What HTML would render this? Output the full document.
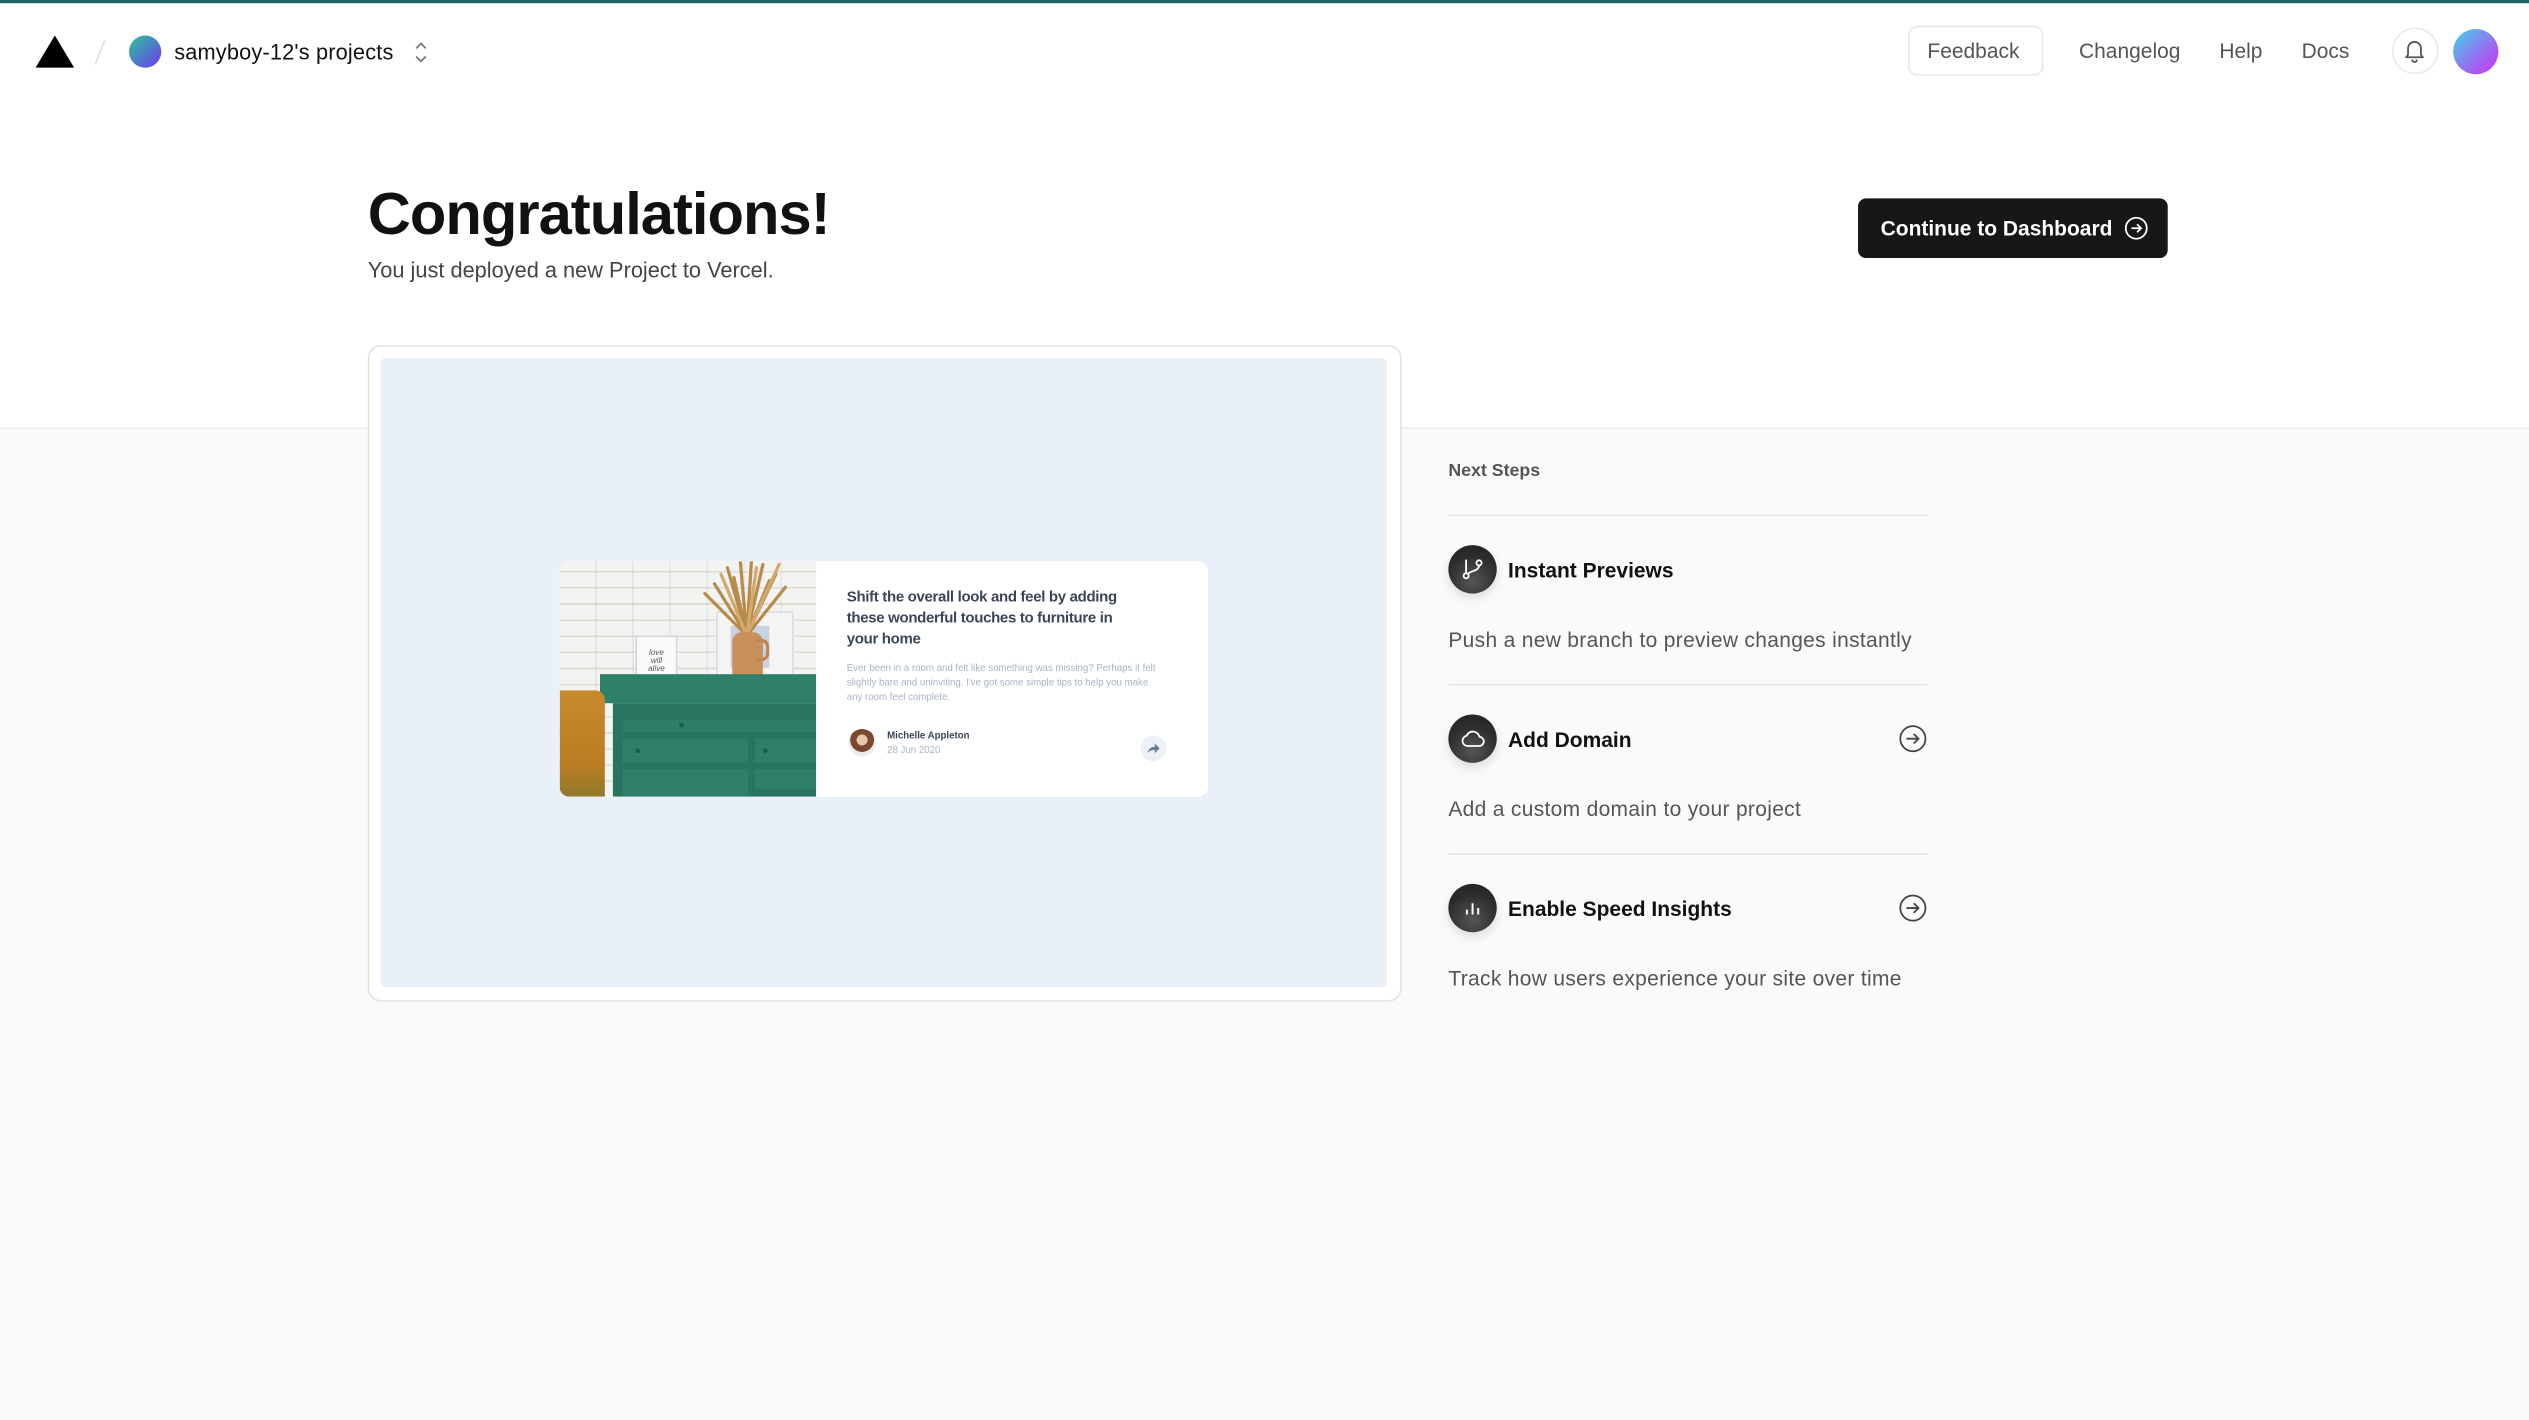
<!DOCTYPE html>
<html><head><meta charset="utf-8">
<style>
html,body{margin:0;padding:0;width:2529px;height:1420px;overflow:hidden;background:#fafafa;}
#w{position:absolute;left:0;top:0;width:1568px;height:880px;transform:scale(1.61288);transform-origin:0 0;font-family:"Liberation Sans",sans-serif;background:#fafafa;overflow:hidden;}
.a{position:absolute;}
.top{left:0;top:0;width:1568px;height:265px;background:#fff;border-bottom:1px solid #eaeaea;}
.nav{font-size:13px;color:#555;top:24px;}
.ns-t{font-size:13px;font-weight:bold;color:#111;left:935px;}
.ns-d{font-size:13px;color:#555;left:898px;letter-spacing:0.2px;}
.ic{left:898px;width:30px;height:30px;border-radius:50%;background:radial-gradient(circle at 50% 75%,#555 0%,#2c2c2c 60%,#222 100%);box-shadow:0 3px 6px rgba(0,0,0,.12);}
.ic svg{position:absolute;left:7px;top:7px;}
.hr{left:898px;width:297px;height:1px;background:#e6e6e6;}
</style></head><body><div id="w">
<div class="a top"></div>
<div class="a" style="left:0;top:0;width:1568px;height:2px;background:#1d6267"></div>

<!-- header -->
<svg class="a" style="left:22px;top:22px" width="24" height="20" viewBox="0 0 24 20"><path d="M12 0L24 20H0Z" fill="#000"/></svg>
<svg class="a" style="left:57px;top:24px" width="10" height="17"><path d="M8 1L2 16" stroke="#e2e2e2" stroke-width="1.2"/></svg>
<div class="a" style="left:80px;top:22px;width:20px;height:20px;border-radius:50%;background:linear-gradient(135deg,#2fc495 0%,#4a80c8 50%,#7434e6 100%)"></div>
<div class="a" style="left:108px;top:25px;font-size:13.5px;color:#111;letter-spacing:0.1px">samyboy-12's projects</div>
<svg class="a" style="left:256px;top:25px" width="10" height="15" viewBox="0 0 10 15"><path d="M2 5L5 2L8 5M2 10L5 13L8 10" fill="none" stroke="#777" stroke-width="1.1"/></svg>

<div class="a" style="left:1183px;top:16px;width:84px;height:31px;border:1px solid #e8e8e8;border-radius:6px;box-sizing:border-box"></div>
<div class="a nav" style="left:1195px">Feedback</div>
<div class="a nav" style="left:1289px">Changelog</div>
<div class="a nav" style="left:1376px">Help</div>
<div class="a nav" style="left:1427px">Docs</div>
<div class="a" style="left:1483px;top:17px;width:29px;height:29px;border:1px solid #eaeaea;border-radius:50%;box-sizing:border-box"></div>
<svg class="a" style="left:1490px;top:24px" width="14" height="15" viewBox="0 0 14 15"><path d="M3 10V6a4 4 0 0 1 8 0v4l1.2 1.5H1.8Z" fill="none" stroke="#555" stroke-width="1.1" stroke-linejoin="round"/><path d="M5.5 13a1.5 1.5 0 0 0 3 0" fill="none" stroke="#555" stroke-width="1.1"/></svg>
<div class="a" style="left:1521px;top:18px;width:28px;height:28px;border-radius:50%;background:linear-gradient(135deg,#3fd8ea 0%,#8c7cf0 50%,#d02ef0 100%)"></div>

<!-- title -->
<div class="a" style="left:228px;top:112px;font-size:37px;font-weight:bold;color:#111;letter-spacing:-0.6px">Congratulations!</div>
<div class="a" style="left:228px;top:160px;font-size:13.5px;color:#444">You just deployed a new Project to Vercel.</div>

<div class="a" style="left:1152px;top:123px;width:192px;height:37px;background:#171717;border-radius:5px"></div>
<div class="a" style="left:1166px;top:134px;font-size:13px;font-weight:bold;color:#fff">Continue to Dashboard</div>
<svg class="a" style="left:1317px;top:134px" width="15" height="15" viewBox="0 0 15 15"><circle cx="7.5" cy="7.5" r="6.5" fill="none" stroke="#fff" stroke-width="1.1"/><path d="M4.5 7.5h6M8 5l2.5 2.5L8 10" fill="none" stroke="#fff" stroke-width="1.1"/></svg>

<!-- preview -->
<div class="a" style="left:228px;top:214px;width:641px;height:407px;background:#fff;border:1px solid #e3e3e3;border-radius:8px;box-sizing:border-box"></div>
<div class="a" style="left:236px;top:222px;width:624px;height:390px;background:#eaf0f8;border-radius:3px"></div>
<div class="a" style="left:347px;top:348px;width:402px;height:146px;background:#fff;border-radius:6px;overflow:hidden">
  <div class="a" style="left:0;top:0;width:159px;height:146px;overflow:hidden;background:repeating-linear-gradient(0deg,#f3f3f1 0 9px,#dcdcd8 9px 10px);">
    <div class="a" style="left:0;top:0;width:159px;height:80px;background:repeating-linear-gradient(90deg,transparent 0 22px,rgba(190,190,185,.5) 22px 23px);opacity:.5"></div>
    <!-- frames -->
    <div class="a" style="left:97px;top:31px;width:48px;height:43px;background:#f4f4f4;border:1px solid #ddd;box-sizing:border-box"></div>
    <div class="a" style="left:106px;top:40px;width:24px;height:26px;background:#c6d3e0"></div>
    <div class="a" style="left:47px;top:46px;width:26px;height:29px;background:#fafafa;border:1px solid #d6d6d6;box-sizing:border-box;font-size:5px;color:#556;text-align:center;line-height:5px;padding-top:8px;font-style:italic">love<br>will<br>alive</div>
    <!-- wheat -->
    <svg class="a" style="left:84px;top:-2px" width="62" height="50" viewBox="0 0 62 50" fill="none" stroke="#b88a4c" stroke-width="2" stroke-linecap="round">
      <path d="M32 48L12 16M32 48L20 6M32 48L28 2M32 48L35 0M32 48L42 4M32 48L50 10M32 48L56 18M32 48L6 22M32 48L24 12M32 48L46 14"/>
      <path d="M32 48L16 10M32 48L38 6M32 48L52 4" stroke="#d2aa6e"/>
    </svg>
    <!-- vase -->
    <div class="a" style="left:107px;top:44px;width:19px;height:40px;background:#c8915b;border-radius:6px 6px 3px 3px"></div>
    <div class="a" style="left:121px;top:48px;width:7px;height:10px;border:2px solid #c08550;border-left:none;border-radius:0 5px 5px 0"></div>
    <!-- dresser -->
    <div class="a" style="left:25px;top:70px;width:134px;height:18px;background:#2f8068"></div>
    <div class="a" style="left:33px;top:88px;width:126px;height:58px;background:#287461"></div>
    <div class="a" style="left:39px;top:98px;width:120px;height:8px;background:#2e7d68"></div>
    <div class="a" style="left:39px;top:110px;width:78px;height:15px;background:#2f806a"></div>
    <div class="a" style="left:121px;top:110px;width:38px;height:15px;background:#2f806a"></div>
    <div class="a" style="left:39px;top:129px;width:78px;height:17px;background:#2f806a"></div>
    <div class="a" style="left:121px;top:129px;width:38px;height:12px;background:#2f806a"></div>
    <div class="a" style="left:74px;top:100px;width:3px;height:3px;border-radius:50%;background:#1f5f4f"></div>
    <div class="a" style="left:126px;top:116px;width:3px;height:3px;border-radius:50%;background:#1f5f4f"></div>
    <div class="a" style="left:47px;top:116px;width:3px;height:3px;border-radius:50%;background:#1f5f4f"></div>
    <!-- chair -->
    <div class="a" style="left:0;top:80px;width:28px;height:66px;background:linear-gradient(180deg,#c78b2d 0%,#b97c22 70%,#8f7a2b 100%);border-radius:0 6px 0 0"></div>
  </div>
  <div class="a" style="left:178px;top:16px;width:186px;font-size:9.3px;line-height:13px;font-weight:bold;color:#3a4658;letter-spacing:-0.2px">Shift the overall look and feel by adding these wonderful touches to furniture in your home</div>
  <div class="a" style="left:178px;top:63px;width:198px;font-size:6px;line-height:9px;color:#a8b3c4">Ever been in a room and felt like something was missing? Perhaps it felt slightly bare and uninviting. I've got some simple tips to help you make any room feel complete.</div>
  <div class="a" style="left:179px;top:104px;width:17px;height:17px;border-radius:50%;background:radial-gradient(circle at 50% 40%,#e8c6ad 0 25%,#7a4a30 26% 55%,#ececec 56%)"></div>
  <div class="a" style="left:203px;top:106px;font-size:6px;font-weight:bold;color:#3a4658">Michelle Appleton</div>
  <div class="a" style="left:203px;top:115px;font-size:6px;color:#a8b3c4">28 Jun 2020</div>
  <div class="a" style="left:360px;top:108px;width:16px;height:16px;border-radius:50%;background:#ecf1f8"></div>
  <svg class="a" style="left:364px;top:112px" width="8" height="8" viewBox="0 0 8 8"><path d="M5 1L8 4L5 7V5C3 5 1.5 5.5 0.5 7C1 4.5 2.5 3 5 3Z" fill="#6c7d95"/></svg>
</div>

<!-- next steps -->
<div class="a" style="left:898px;top:286px;font-size:11px;font-weight:bold;color:#555">Next Steps</div>
<div class="a hr" style="top:319px"></div>

<div class="a ic" style="top:338px"><svg width="16" height="16" viewBox="0 0 16 16" fill="none" stroke="#fff" stroke-width="1.1"><circle cx="4" cy="12" r="1.6"/><circle cx="12" cy="4" r="1.6"/><path d="M4 2v8.4M12 5.6c0 3.5-5 3-7 5.3"/></svg></div>
<div class="a ns-t" style="top:346px">Instant Previews</div>
<div class="a ns-d" style="top:389px">Push a new branch to preview changes instantly</div>
<div class="a hr" style="top:424px"></div>

<div class="a ic" style="top:443px"><svg width="16" height="16" viewBox="0 0 16 16" fill="none" stroke="#fff" stroke-width="1.1"><path d="M4.5 12.5h7.5a2.8 2.8 0 0 0 .3-5.6A4.2 4.2 0 0 0 4.3 6.2 3.2 3.2 0 0 0 4.5 12.5Z"/></svg></div>
<div class="a ns-t" style="top:451px">Add Domain</div>
<svg class="a" style="left:1177px;top:449px" width="18" height="18" viewBox="0 0 18 18"><circle cx="9" cy="9" r="7.8" fill="none" stroke="#444" stroke-width="1.1"/><path d="M5 9h7.5M9.5 6l3 3-3 3" fill="none" stroke="#444" stroke-width="1.1"/></svg>
<div class="a ns-d" style="top:494px">Add a custom domain to your project</div>
<div class="a hr" style="top:529px"></div>

<div class="a ic" style="top:548px"><svg width="16" height="16" viewBox="0 0 16 16" fill="none" stroke="#fff" stroke-width="1.2"><path d="M4.5 12V9M8 12V5M11.5 12V8"/></svg></div>
<div class="a ns-t" style="top:556px">Enable Speed Insights</div>
<svg class="a" style="left:1177px;top:554px" width="18" height="18" viewBox="0 0 18 18"><circle cx="9" cy="9" r="7.8" fill="none" stroke="#444" stroke-width="1.1"/><path d="M5 9h7.5M9.5 6l3 3-3 3" fill="none" stroke="#444" stroke-width="1.1"/></svg>
<div class="a ns-d" style="top:599px">Track how users experience your site over time</div>
</div></body></html>
